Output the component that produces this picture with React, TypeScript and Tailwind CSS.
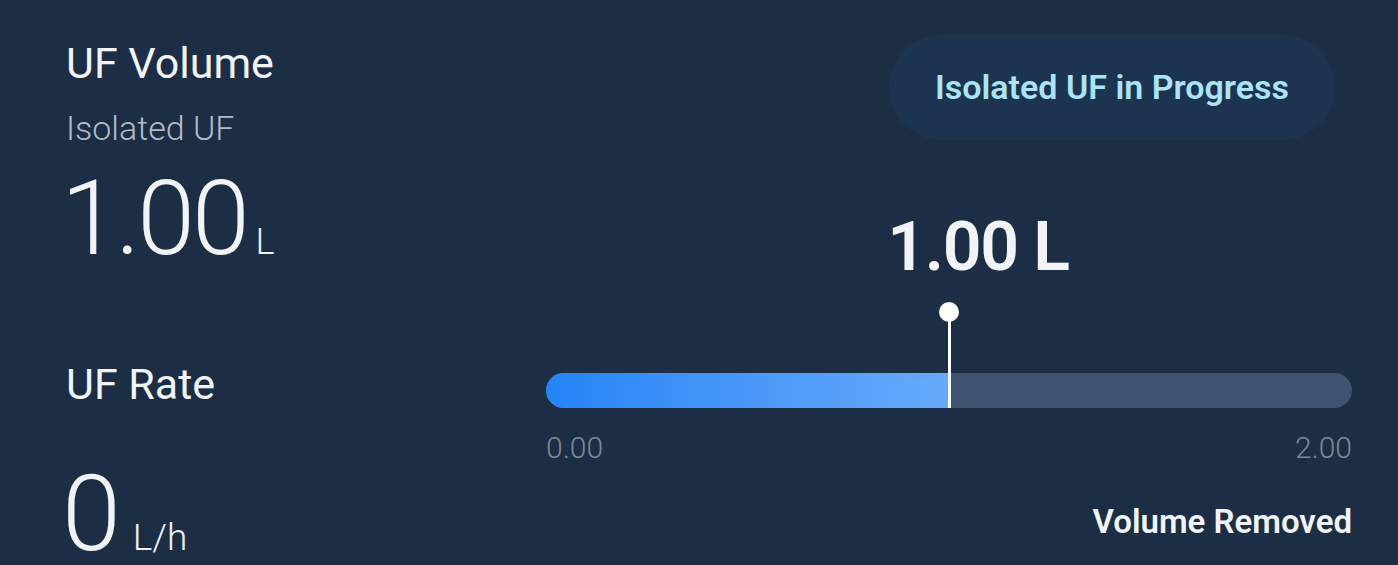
export default function App() {
  return (
    <div
      className="flex h-[565px] w-full overflow-hidden bg-[#1b2e45] text-[#f1f3f5]"
      style={{ fontFamily: 'Roboto, "Liberation Sans", sans-serif' }}
    >
      {/* left: readings */}
      <div className="flex w-[546px] shrink-0 flex-col pl-[66px]">
        <div className="mt-[42px] text-[43px] leading-[43px]">UF Volume</div>
        <div className="mt-[26px] text-[34px] leading-[34px] font-light text-[#b3bcc6]">Isolated UF</div>
        <div className="mt-[21px] flex items-baseline">
          <span className="-ml-[5px] text-[104px] leading-[106px] font-light tracking-[-0.03em]">1.00</span>
          <span className="ml-[9px] text-[36px] font-light">L</span>
        </div>
        <div className="mt-[91px] text-[43px] leading-[43px]">UF Rate</div>
        <div className="mt-[63px] flex items-baseline">
          <span className="-ml-[4px] text-[106px] leading-[90px] font-light">0</span>
          <span className="ml-[12px] text-[37px] font-light">L/h</span>
        </div>
      </div>

      {/* right: progress */}
      <div className="flex flex-1 flex-col pr-[46px]">
        <div className="mt-[35px] flex justify-end pr-[17px]">
          <div className="flex h-[105px] items-center rounded-full bg-[#1d3450] px-[46px] text-[34px] font-semibold text-[#a9e4f7]">
            Isolated UF in Progress
          </div>
        </div>

        <div className="mt-[73px] flex justify-center pl-[58px]">
          <span className="text-[68px] leading-[68px] font-semibold tracking-[-0.02em]">1.00 L</span>
        </div>

        <div className="relative pt-[92px]">
          <div className="flex h-[35px] overflow-hidden rounded-full bg-[#3d536f]">
            <div className="h-full w-1/2 bg-gradient-to-r from-[#2484f6] to-[#66aafc]" />
          </div>
          <div className="absolute top-[21px] bottom-0 left-1/2 flex -translate-x-1/2 flex-col items-center">
            <div className="h-5 w-5 rounded-full bg-white" />
            <div className="-mt-1 w-[3px] flex-1 bg-white" />
          </div>
        </div>

        <div className="mt-[25px] flex justify-between text-[30px] leading-[30px] font-light text-[#7d8896]">
          <span>0.00</span>
          <span>2.00</span>
        </div>

        <div className="mt-[42px] text-right text-[33px] leading-[33px] font-semibold">Volume Removed</div>
      </div>
    </div>
  );
}
